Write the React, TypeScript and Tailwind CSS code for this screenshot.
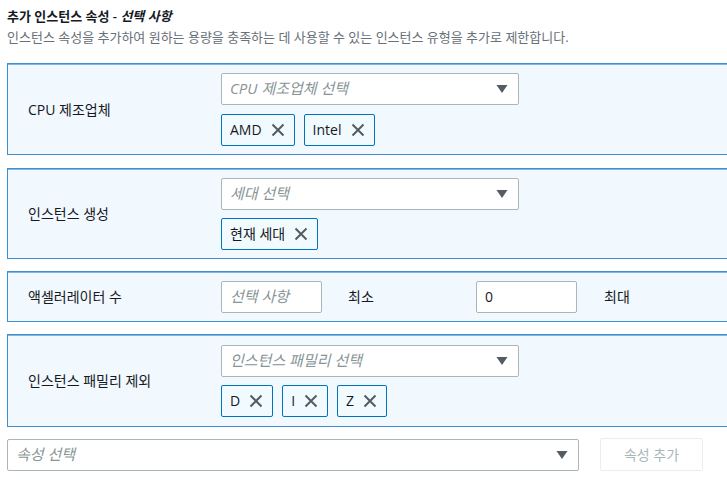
import React from "react";

const font = { fontFamily: '"Open Sans", "Noto Sans CJK KR", sans-serif' };

function XIcon() {
  return (
    <svg width="16" height="16" viewBox="0 0 16 16" className="shrink-0">
      <path d="M2.5 2.5 L13.5 13.5 M13.5 2.5 L2.5 13.5" stroke="#545b64" strokeWidth="2" fill="none" />
    </svg>
  );
}

function Caret() {
  return (
    <svg width="12" height="10" viewBox="0 0 12 10" className="shrink-0">
      <path d="M0.5 1 L11.5 1 L6 9 Z" fill="#545b64" />
    </svg>
  );
}

function Placeholder({ text }: { text: string }) {
  return <span className="italic text-[15px] text-[#879596]">{text}</span>;
}

function Select({ placeholder, className }: { placeholder: string; className: string }) {
  return (
    <div className={`flex items-center justify-between h-8 border border-[#aab7b8] rounded-[2px] bg-white pl-2 pr-[10px] ${className}`}>
      <Placeholder text={placeholder} />
      <Caret />
    </div>
  );
}

function Tag({ label }: { label: string }) {
  return (
    <div className="inline-flex items-center gap-[8px] h-8 border border-[#0073bb] rounded-[2px] bg-[#f1faff] pl-2 pr-[8px]">
      <span className="text-[14px] text-[#16191f]">{label}</span>
      <XIcon />
    </div>
  );
}

function Panel({ children, h, mt }: { children: React.ReactNode; h: string; mt: string }) {
  return (
    <div className={`w-[760px] ${h} ${mt} border border-[#3d8fd0] bg-[#f1f8fe] flex items-center shadow-[inset_0_1px_0_#7fb6e3]`}>
      {children}
    </div>
  );
}

export default function App() {
  return (
    <div lang="ko" className="w-[727px] h-[483px] overflow-hidden bg-white" style={font}>
      <div className="pl-[7px] pt-[6px]">
        <div className="text-[13px] font-semibold text-[#16191f] leading-[20px]">
          추가 인스턴스 속성 - <span className="italic">선택 사항</span>
        </div>
        <div className="text-[13px] text-[#687078] leading-[18px] mt-[2px]">
          인스턴스 속성을 추가하여 원하는 용량을 충족하는 데 사용할 수 있는 인스턴스 유형을 추가로 제한합니다.
        </div>

        <div className="mt-[17px] flex flex-col">
          <Panel h="h-[92px]" mt="mt-0">
            <div className="w-[213px] pl-[20px] text-[14px] text-[#16191f]">CPU 제조업체</div>
            <div className="flex flex-col gap-[9px]">
              <Select placeholder="CPU 제조업체 선택" className="w-[298px]" />
              <div className="flex gap-[9px]">
                <Tag label="AMD" />
                <Tag label="Intel" />
              </div>
            </div>
          </Panel>

          <Panel h="h-[91px]" mt="mt-[13px]">
            <div className="w-[213px] pl-[20px] text-[14px] text-[#16191f]">인스턴스 생성</div>
            <div className="flex flex-col gap-[8px]">
              <Select placeholder="세대 선택" className="w-[298px]" />
              <div className="flex gap-[9px]">
                <Tag label="현재 세대" />
              </div>
            </div>
          </Panel>

          <Panel h="h-[51px]" mt="mt-[12px]">
            <div className="w-[213px] pl-[20px] text-[14px] text-[#16191f]">액셀러레이터 수</div>
            <div className="w-[101px] h-8 border border-[#aab7b8] rounded-[2px] bg-white pl-2 flex items-center">
              <Placeholder text="선택 사항" />
            </div>
            <div className="w-[154px] pl-[26px] text-[14px] text-[#16191f]">최소</div>
            <div className="w-[101px] h-8 border border-[#aab7b8] rounded-[2px] bg-white pl-2 flex items-center">
              <span className="text-[14px] text-[#16191f]">0</span>
            </div>
            <div className="pl-[27px] text-[14px] text-[#16191f]">최대</div>
          </Panel>

          <Panel h="h-[93px]" mt="mt-[12px]">
            <div className="w-[213px] pl-[20px] text-[14px] text-[#16191f]">인스턴스 패밀리 제외</div>
            <div className="flex flex-col gap-[8px]">
              <Select placeholder="인스턴스 패밀리 선택" className="w-[298px]" />
              <div className="flex gap-[9px]">
                <Tag label="D" />
                <Tag label="I" />
                <Tag label="Z" />
              </div>
            </div>
          </Panel>
        </div>

        <div className="mt-[11px] flex items-center">
          <Select placeholder="속성 선택" className="w-[572px]" />
          <div className="ml-[21px] w-[103px] h-[33px] border border-[#eaeded] rounded-[2px] flex items-center justify-center text-[14px] text-[#aab7b8]">
            속성 추가
          </div>
        </div>
      </div>
    </div>
  );
}
